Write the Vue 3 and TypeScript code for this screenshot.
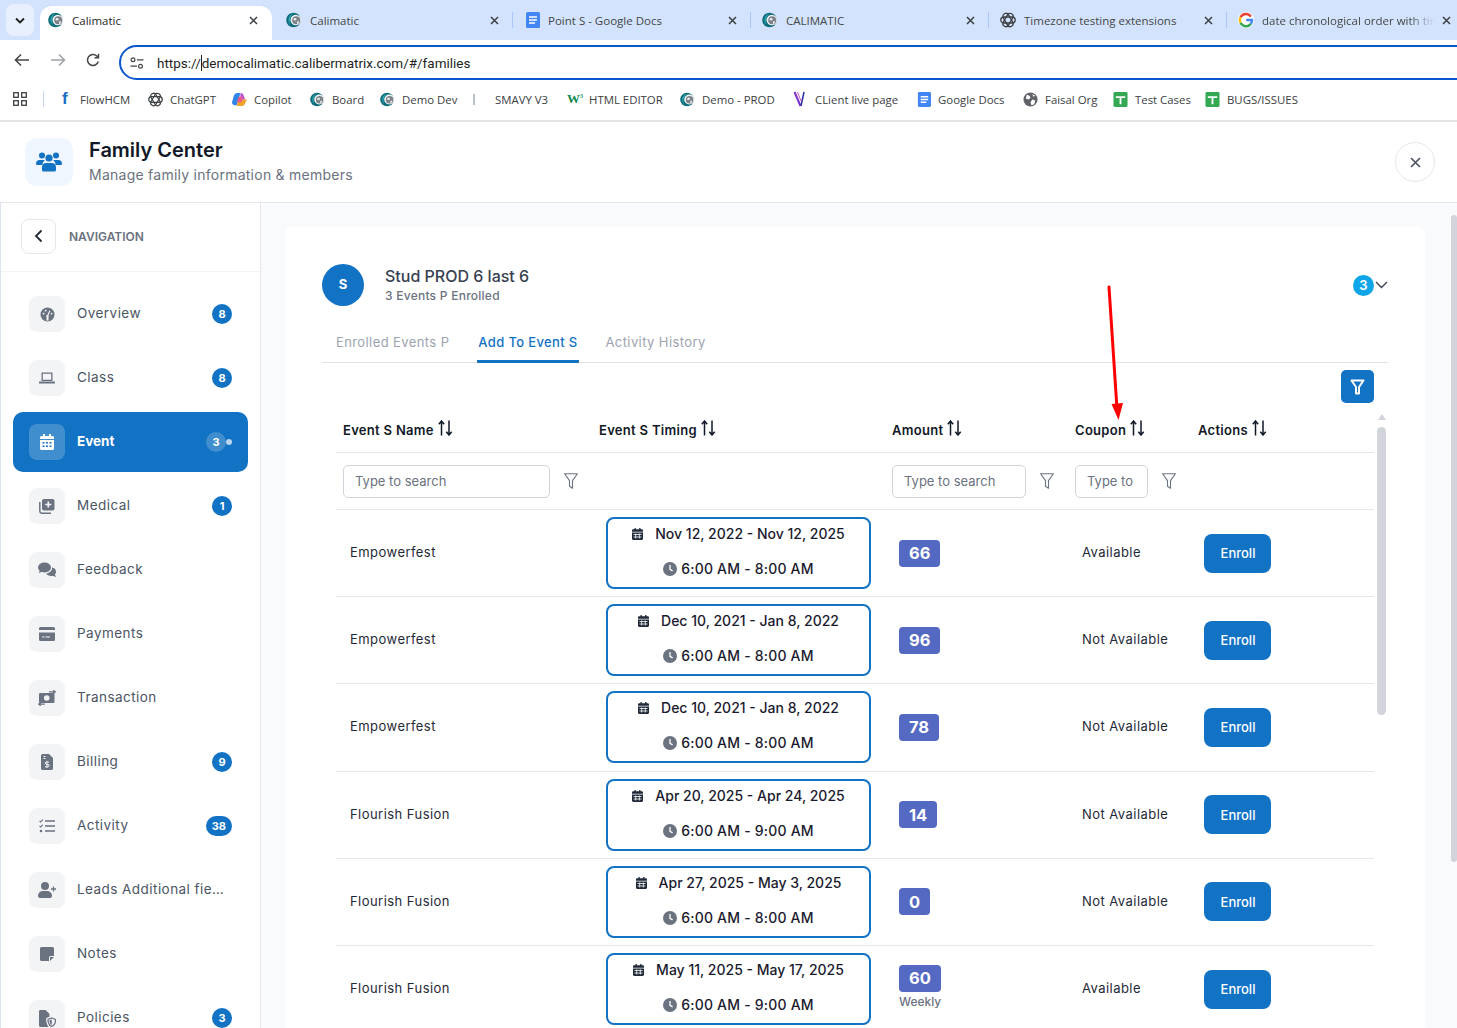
<template>
  <div class="screen">
    <!-- shared favicons and nav glyphs -->
    <svg class="defs" width="0" height="0">
      <symbol id="cal" viewBox="0 0 16 16">
        <circle cx="7.500" cy="8" r="7.300" fill="#0f6c78" />
        <path d="M7 1.500C4.500 2.500 2.500 5 2.500 8s1 4.500 2 5.500C3 11 3 5 7 1.500z" fill="#35b5bd" />
        <circle cx="9.800" cy="8" r="5.300" fill="#f1f3f5" />
        <circle cx="10.200" cy="8.300" r="4" fill="#7d8288" />
        <path d="M8 6.300l2-.4 .7 2-1.500.7L7.300 8zM11 9.500l2-.5-.5 2.300-1.500.8z" fill="#eceef0" />
      </symbol>
      <symbol id="docs" viewBox="0 0 16 16">
        <path d="M2 1.500A1.500 1.500 0 013.500 0H14.500A1.500 1.500 0 0116 1.500V14.500A1.500 1.500 0 0114.500 16H3.500A1.500 1.500 0 012 14.500z" fill="#4285f4" />
        <path d="M5 5h8M5 8h8M5 11h6" stroke="#fff" stroke-width="1.500" />
      </symbol>
      <symbol id="sheet" viewBox="0 0 16 16">
        <rect x="0.500" width="15" height="16" rx="1.500" fill="#34a853" />
        <path d="M3 5.500h10M8 5.500V13" stroke="#fff" stroke-width="2" fill="none" />
      </symbol>
      <symbol id="gpt" viewBox="0 0 16 16">
        <g fill="none" stroke="#3c4043" stroke-width="1.300">
          <rect x="0.800" y="5" width="14.400" height="6" rx="3" />
          <rect x="0.800" y="5" width="14.400" height="6" rx="3" transform="rotate(60 8 8)" />
          <rect x="0.800" y="5" width="14.400" height="6" rx="3" transform="rotate(120 8 8)" />
        </g>
      </symbol>
      <symbol id="globe" viewBox="0 0 16 16">
        <circle cx="8" cy="8" r="7.500" fill="#5f6368" />
        <path d="M4 3l3 1 1 2-2 2-3-1zM10 8l3 1-1 4-3 1-1-3zM10 2l3 2-2 1z" fill="#fff" />
      </symbol>
      <symbol id="copilot" viewBox="0 0 16 16">
        <path d="M5 1h4l-2 7-2 6H3a3 3 0 01-3-3l2-7a4 4 0 013-3z" fill="#2f86e8" />
        <path d="M9 1c2 0 3 1 3.500 3L14 8l-5 .5z" fill="#b44fd6" />
        <path d="M7 8h6l3 0-2 4a4 4 0 01-4 3H5z" fill="#f0a32a" />
        <path d="M7 5h5l-2 6H5z" fill="#e85a8f" />
      </symbol>
      <symbol id="ico-overview" viewBox="0 0 16 16">
        <circle cx="8" cy="8" r="7.500" fill="#6b7280" />
        <path d="M8 8.500V14.500" stroke="#f3f4f6" stroke-width="2.200" />
        <path d="M8 9.500L10.500 4" stroke="#f3f4f6" stroke-width="1.200" />
        <circle cx="3.800" cy="7" r="1" fill="#f3f4f6" />
        <circle cx="6" cy="3.800" r="1" fill="#f3f4f6" />
        <circle cx="12.300" cy="7" r="1" fill="#f3f4f6" />
      </symbol>
      <symbol id="ico-class" viewBox="0 0 16 16">
        <path d="M2.500 2.500h11v8.500h-11zM3.800 3.800v5.900h8.400V3.800z" fill="#6b7280" fill-rule="evenodd" />
        <rect y="11.500" width="16" height="2" rx="0.500" fill="#6b7280" />
      </symbol>
      <symbol id="ico-event" viewBox="0 0 14 16">
        <path d="M3 0h2v2h4V0h2v2h1.500A1.500 1.500 0 0114 3.500V5H0V3.500A1.500 1.500 0 011.500 2H3zM0 6h14v8.500a1.500 1.500 0 01-1.500 1.500h-11A1.500 1.500 0 010 14.500z" fill="#fff" />
        <path d="M2.500 8h2v1.500h-2zM6 8h2v1.500H6zM9.500 8h2v1.500h-2zM2.500 11.500h2V13h-2zM6 11.500h2V13H6zM9.500 11.500h2V13h-2z" fill="#1272c4" />
      </symbol>
      <symbol id="ico-medical" viewBox="0 0 16 16">
        <path d="M5 1h8.500A2 2 0 0115.500 3v7.500a2 2 0 01-2 2H5a2 2 0 01-2-2V3a2 2 0 012-2z" fill="#6b7280" />
        <path d="M9.300 3.500v6M6.300 6.500h6" stroke="#f3f4f6" stroke-width="1.700" />
        <path d="M.8 4v9a2.300 2.300 0 002.300 2.300H12" fill="none" stroke="#6b7280" stroke-width="1.500" />
      </symbol>
      <symbol id="ico-feedback" viewBox="0 0 18 16">
        <ellipse cx="6.500" cy="5.500" rx="6.500" ry="5" fill="#6b7280" />
        <path d="M2 8L.8 11l4-1.500z" fill="#6b7280" />
        <path d="M14.200 5.500A5 4.500 0 0118 9.800c0 1-.4 2-1.100 2.700l1.100 2.500-3.300-1.300a6 6 0 01-1.700.2c-2.200 0-4.100-1-4.900-2.500 3.500-.2 6.100-2.900 6.100-5.900z" fill="#6b7280" />
      </symbol>
      <symbol id="ico-payments" viewBox="0 0 16 14">
        <path d="M1.500 0h13A1.500 1.500 0 0116 1.500V3H0V1.500A1.500 1.500 0 011.500 0zM0 5.500h16v7a1.500 1.500 0 01-1.500 1.500h-13A1.500 1.500 0 010 12.500z" fill="#6b7280" />
        <path d="M3 10h2.500M6.500 10H11" stroke="#f3f4f6" stroke-width="1" />
      </symbol>
      <symbol id="ico-transaction" viewBox="0 0 18 16">
        <rect x="1" y="3" width="15.500" height="10" rx="1" fill="#6b7280" />
        <circle cx="8.700" cy="8" r="2.800" fill="#f3f4f6" />
        <path d="M11 1.800h6M15.200.3L17.500 1.800 15.200 3.300M.8 14.200h6M2.800 12.700L.5 14.200l2.300 1.500" fill="none" stroke="#6b7280" stroke-width="1.200" />
      </symbol>
      <symbol id="ico-billing" viewBox="0 0 12 16">
        <path d="M1.500 0H8l4 4v10.500a1.500 1.500 0 01-1.500 1.500h-9A1.500 1.500 0 010 14.500v-13A1.500 1.500 0 011.500 0z" fill="#6b7280" />
        <path d="M2.500 2.500h2M2.500 4.500h2M8 8H5.500a1.200 1.200 0 000 2.400h1.500a1.200 1.200 0 010 2.400H4M6 7v7" fill="none" stroke="#f3f4f6" stroke-width="1" />
      </symbol>
      <symbol id="ico-activity" viewBox="0 0 16 14">
        <path d="M6 2h10M6 7h10M6 12h10" stroke="#6b7280" stroke-width="1.500" />
        <path d="M.5 1.800l1.200 1.200L3.800.6M.5 6.800L1.700 8l2.100-2.400" fill="none" stroke="#6b7280" stroke-width="1.100" />
        <circle cx="2" cy="12" r="1.300" fill="#6b7280" />
      </symbol>
      <symbol id="ico-leads" viewBox="0 0 18 16">
        <circle cx="7" cy="4" r="4" fill="#6b7280" />
        <path d="M0 14c0-3.300 2.500-5 5-5h4c2.500 0 5 1.700 5 5a2 2 0 01-2 2H2a2 2 0 01-2-2z" fill="#6b7280" />
        <path d="M15.500 4.500v5M13 7h5" stroke="#6b7280" stroke-width="1.300" />
      </symbol>
      <symbol id="ico-notes" viewBox="0 0 14 14">
        <path d="M1.500 0h11A1.500 1.500 0 0114 1.500V9H10.500A1.500 1.500 0 009 10.500V14H1.500A1.500 1.500 0 010 12.500v-11A1.500 1.500 0 011.500 0zM10 14v-3.500a.5.5 0 01.5-.5H14z" fill="#6b7280" />
      </symbol>
      <symbol id="ico-policies" viewBox="0 0 18 18">
        <path d="M1.500 0H7l4 4v3.500c-2 .5-3.300 1-3.500 1.500 0 3 .5 6 2.500 9H1.500A1.500 1.500 0 010 16.500v-15A1.500 1.500 0 011.500 0z" fill="#6b7280" />
        <path d="M13.500 8.500l4 1.500c0 3.500-1 6.300-4 7.500-3-1.200-4-4-4-7.500z" fill="none" stroke="#6b7280" stroke-width="1.300" />
        <path d="M13.500 10v6c-1.500-1-2.300-2.500-2.500-5z" fill="#6b7280" />
      </symbol>
      <symbol id="sort" viewBox="0 0 15 16">
        <path d="M3.500 15.500V1M.8 4.200L3.500 1l2.700 3.200M11 .5V15M8.300 11.800L11 15l2.700-3.200" fill="none" stroke="#111827" stroke-width="1.500" />
      </symbol>
      <symbol id="funnel" viewBox="0 0 14 16">
        <path d="M.6.800h12.800L8.500 7.600v7.600L5.500 13.200V7.600z" fill="none" stroke="#6b7280" stroke-width="1.100" stroke-linejoin="round" />
      </symbol>
      <symbol id="mini-cal" viewBox="0 0 11 12">
        <path d="M2.500 0h1.300v1.300h3.400V0h1.300v1.300h1.200c.6 0 1.300.5 1.300 1.200v1.200H0V2.500c0-.7.600-1.200 1.300-1.200h1.200zM0 4.500h11v6.300c0 .7-.6 1.200-1.300 1.200H1.300C.6 12 0 11.500 0 10.800z" fill="#1f2937" />
        <path d="M1.500 6.500h8M1.500 9h8M3.700 5.500v5M7.300 5.500v5" stroke="#fff" stroke-width="0.800" />
      </symbol>
      <symbol id="mini-clock" viewBox="0 0 14 14">
        <circle cx="7" cy="7" r="7" fill="#6b7280" />
        <path d="M7 3v4.300l2.600 1.600" fill="none" stroke="#fff" stroke-width="1.300" />
      </symbol>
    </svg>

    <!-- browser chrome -->
    <div class="tabstrip">
      <button class="tab-menu">
        <svg width="10" height="7" viewBox="0 0 10 7"><path d="M1 1.500l4 4 4-4" fill="none" stroke="#1f1f1f" stroke-width="1.800" /></svg>
      </button>
      <div v-for="(tab, i) in tabs" :key="i" class="tab" :class="{ 'tab-on': i === 0, 'tab-sep': i > 1 }">
        <svg v-if="tab.icon === 'g'" class="fav" viewBox="0 0 16 16">
          <circle cx="8" cy="8" r="8" fill="#fff" />
          <path d="M12.900 4.600A6 6 0 002.600 5.200" fill="none" stroke="#ea4335" stroke-width="2.400" />
          <path d="M2.600 5.200a6 6 0 000 5.600" fill="none" stroke="#fbbc05" stroke-width="2.400" />
          <path d="M2.600 10.800a6 6 0 0010.300.9" fill="none" stroke="#34a853" stroke-width="2.400" />
          <path d="M12.900 11.700A6 6 0 0014 8H8.200" fill="none" stroke="#4285f4" stroke-width="2.400" />
        </svg>
        <svg v-else class="fav"><use :href="'#' + tab.icon" /></svg>
        <span class="tab-title" :class="{ fade: i === 5 }">{{ tab.title }}</span>
        <svg class="tab-x" width="9" height="9" viewBox="0 0 9 9"><path d="M1 1l7 7M8 1L1 8" stroke="#3c4043" stroke-width="1.500" /></svg>
      </div>
    </div>

    <div class="addr-row">
      <svg width="16" height="14" viewBox="0 0 16 14"><path d="M15 7H2M7 1.500L1.500 7 7 12.500" fill="none" stroke="#444746" stroke-width="1.600" /></svg>
      <svg width="16" height="14" viewBox="0 0 16 14"><path d="M1 7h13M9 1.500L14.500 7 9 12.500" fill="none" stroke="#a0a4a8" stroke-width="1.600" /></svg>
      <svg width="14" height="14" viewBox="0 0 14 14"><path d="M12.300 8.500A5.500 5.500 0 1110.800 3L12.500 4.700M12.500.8v4H8.500" fill="none" stroke="#444746" stroke-width="1.500" /></svg>
      <div class="addr">
        <svg width="14" height="12" viewBox="0 0 14 12"><g fill="none" stroke="#444746" stroke-width="1.200"><circle cx="3" cy="2.800" r="1.900" /><path d="M7 2.800h6.500M.5 9.200H7" /><circle cx="10.500" cy="9.200" r="1.900" /></g></svg>
        <span class="url">https://<i class="caret"></i>democalimatic.calibermatrix.com/#/families</span>
      </div>
    </div>

    <div class="bookmarks">
      <svg class="apps" width="14" height="14" viewBox="0 0 14 14"><g fill="none" stroke="#3c4043" stroke-width="1.300"><rect x="0.700" y="0.700" width="4.600" height="4.600" /><rect x="8.700" y="0.700" width="4.600" height="4.600" /><rect x="0.700" y="8.700" width="4.600" height="4.600" /><rect x="8.700" y="8.700" width="4.600" height="4.600" /></g></svg>
      <i class="bm-sep"></i>
      <div v-for="b in bookmarks" :key="b.label" class="bm" :style="{ width: b.w + 'px' }">
        <span class="bm-icon" :class="{ narrow: b.icon === 'f' }">
          <b v-if="b.icon === 'f'" class="bm-f">f</b>
          <b v-else-if="b.icon === 'w'" class="bm-w">W<sup>3</sup></b>
          <i v-else-if="b.icon === 'sliver'" class="bm-sliver"></i>
          <svg v-else-if="b.icon === 'v'" width="16" height="16" viewBox="0 0 16 16"><path d="M1.500 1l6 14" stroke="#7b2fd1" stroke-width="2" /><path d="M8 15l3-14" stroke="#2a2fa8" stroke-width="1.500" /><path d="M4.500 1l3.500 9" stroke="#d94fb0" stroke-width="1" /></svg>
          <svg v-else width="15" height="15"><use :href="'#' + b.icon" /></svg>
        </span>
        <span>{{ b.label }}</span>
      </div>
    </div>

    <!-- page header -->
    <header class="page-head">
      <div class="head-icon">
        <svg width="26" height="20" viewBox="0 0 26 20" fill="#1272c4">
          <circle cx="6" cy="3.500" r="3" /><circle cx="20" cy="3.500" r="3" /><circle cx="13" cy="6" r="3.600" />
          <path d="M0 12c0-3 1.500-4 3.500-4h4c.6 0 1 .1 1.300.3-1.500 1-2.300 2.700-2.300 4.700H1a1 1 0 01-1-1zM26 12c0-3-1.500-4-3.500-4h-4c-.6 0-1 .1-1.300.3 1.500 1 2.300 2.700 2.300 4.700h5.500a1 1 0 001-1zM10 11h6c2.300 0 4 1.700 4 4.500v2.500a1.500 1.500 0 01-1.500 1.500h-11A1.500 1.500 0 016 18v-2.500C6 12.700 7.700 11 10 11z" />
        </svg>
      </div>
      <div class="head-text">
        <h1>Family Center</h1>
        <p>Manage family information &amp; members</p>
      </div>
      <button class="close">
        <svg width="11" height="11" viewBox="0 0 11 11"><path d="M1 1l9 9M10 1l-9 9" stroke="#4b5563" stroke-width="1.700" /></svg>
      </button>
    </header>

    <div class="body">
      <aside class="side">
        <div class="side-head">
          <button class="back">
            <svg width="9" height="14" viewBox="0 0 9 14"><path d="M7.500 1.500L2 7l5.500 5.500" fill="none" stroke="#1f2937" stroke-width="1.800" /></svg>
          </button>
          <span>NAVIGATION</span>
        </div>
        <nav class="nav">
          <div v-for="item in navItems" :key="item.label" class="nav-item" :class="{ active: item.label === 'Event' }">
            <span class="nav-icon"><svg :width="item.iw" :height="item.ih"><use :href="'#' + item.icon" /></svg></span>
            <span class="nav-label">{{ item.label }}</span>
            <span v-if="item.badge" class="nav-badge">{{ item.badge }}</span>
            <i v-if="item.label === 'Event'" class="nav-dot"></i>
          </div>
        </nav>
      </aside>

      <main class="main">
        <section class="card">
          <div class="student">
            <div class="avatar">S</div>
            <div class="student-info">
              <div class="student-name">Stud PROD 6 last 6</div>
              <div class="student-sub">3 Events P Enrolled</div>
            </div>
            <span class="count">3</span>
            <svg width="13" height="8" viewBox="0 0 13 8"><path d="M1 1l5.500 5.500L12 1" fill="none" stroke="#374151" stroke-width="1.300" /></svg>
          </div>

          <div class="tabs">
            <span>Enrolled Events P</span>
            <span class="tab-active">Add To Event S</span>
            <span>Activity History</span>
          </div>

          <div class="filter-bar">
            <button class="filter-btn">
              <svg width="15" height="16" viewBox="0 0 15 16"><path d="M1.500 1.500h12L9 8v6.500H6V8z" fill="none" stroke="#fff" stroke-width="2" stroke-linejoin="round" /></svg>
            </button>
          </div>

          <div class="table-area">
            <div class="table">
              <div class="row head">
                <div v-for="h in heads" :key="h" class="th">
                  {{ h }}
                  <svg width="15" height="16"><use href="#sort" /></svg>
                </div>
              </div>
              <div class="row search">
                <div class="sf"><input class="in in-name" placeholder="Type to search" /><svg class="fn" width="14" height="16"><use href="#funnel" /></svg></div>
                <div></div>
                <div class="sf"><input class="in in-amt" placeholder="Type to search" /><svg class="fn" width="14" height="16"><use href="#funnel" /></svg></div>
                <div class="sf"><input class="in in-cpn" placeholder="Type to search" /><svg class="fn" width="14" height="16"><use href="#funnel" /></svg></div>
                <div></div>
              </div>
              <div v-for="(r, i) in rows" :key="i" class="row item">
                <div class="cell-name">{{ r.name }}</div>
                <div>
                  <div class="when">
                    <div class="when-line">
                      <svg class="when-cal" width="11" height="12"><use href="#mini-cal" /></svg>
                      {{ r.date }}
                    </div>
                    <div class="when-line when-time">
                      <svg class="when-clock" width="14" height="14"><use href="#mini-clock" /></svg>
                      {{ r.time }}
                    </div>
                  </div>
                </div>
                <div class="cell-amt">
                  <span class="amt">{{ r.amount }}</span>
                  <small v-if="r.note">{{ r.note }}</small>
                </div>
                <div class="cell-cpn">{{ r.coupon }}</div>
                <div class="cell-act"><button class="enroll">Enroll</button></div>
              </div>
            </div>
            <div class="inner-scroll">
              <i class="up"></i>
              <i class="thumb"></i>
            </div>
          </div>
        </section>
      </main>

      <div class="outer-scroll"><i class="thumb2"></i></div>
    </div>

    <!-- annotation drawn over the screenshot -->
    <svg class="arrow" width="30" height="150" viewBox="0 0 30 150">
      <path d="M9 2l8 122" stroke="#f00" stroke-width="3" stroke-linecap="round" />
      <path d="M11.500 119l11.500-1-4.500 17z" fill="#f00" />
    </svg>
  </div>
</template>

<script setup lang="ts">
const tabs = [
  { icon: 'cal', title: 'Calimatic' },
  { icon: 'cal', title: 'Calimatic' },
  { icon: 'docs', title: 'Point S - Google Docs' },
  { icon: 'cal', title: 'CALIMATIC' },
  { icon: 'gpt', title: 'Timezone testing extensions' },
  { icon: 'g', title: 'date chronological order with time' }
]

const bookmarks = [
  { icon: 'f', label: 'FlowHCM', w: 88 },
  { icon: 'gpt', label: 'ChatGPT', w: 84 },
  { icon: 'copilot', label: 'Copilot', w: 78 },
  { icon: 'cal', label: 'Board', w: 70 },
  { icon: 'cal', label: 'Demo Dev', w: 93 },
  { icon: 'sliver', label: 'SMAVY V3', w: 94 },
  { icon: 'w', label: 'HTML EDITOR', w: 113 },
  { icon: 'cal', label: 'Demo - PROD', w: 113 },
  { icon: 'v', label: 'CLient live page', w: 123 },
  { icon: 'docs', label: 'Google Docs', w: 107 },
  { icon: 'globe', label: 'Faisal Org', w: 90 },
  { icon: 'sheet', label: 'Test Cases', w: 92 },
  { icon: 'sheet', label: 'BUGS/ISSUES', w: 110 }
]

const navItems = [
  { label: 'Overview', icon: 'ico-overview', iw: 15, ih: 15, badge: '8' },
  { label: 'Class', icon: 'ico-class', iw: 16, ih: 16, badge: '8' },
  { label: 'Event', icon: 'ico-event', iw: 14, ih: 16, badge: '3' },
  { label: 'Medical', icon: 'ico-medical', iw: 16, ih: 16, badge: '1' },
  { label: 'Feedback', icon: 'ico-feedback', iw: 18, ih: 16, badge: '' },
  { label: 'Payments', icon: 'ico-payments', iw: 16, ih: 14, badge: '' },
  { label: 'Transaction', icon: 'ico-transaction', iw: 18, ih: 16, badge: '' },
  { label: 'Billing', icon: 'ico-billing', iw: 12, ih: 16, badge: '9' },
  { label: 'Activity', icon: 'ico-activity', iw: 16, ih: 14, badge: '38' },
  { label: 'Leads Additional fields', icon: 'ico-leads', iw: 18, ih: 16, badge: '' },
  { label: 'Notes', icon: 'ico-notes', iw: 14, ih: 14, badge: '' },
  { label: 'Policies', icon: 'ico-policies', iw: 17, ih: 17, badge: '3' }
]

const heads = ['Event S Name', 'Event S Timing', 'Amount', 'Coupon', 'Actions']

const rows = [
  { name: 'Empowerfest', date: 'Nov 12, 2022 - Nov 12, 2025', time: '6:00 AM - 8:00 AM', amount: '66', coupon: 'Available', note: '' },
  { name: 'Empowerfest', date: 'Dec 10, 2021 - Jan 8, 2022', time: '6:00 AM - 8:00 AM', amount: '96', coupon: 'Not Available', note: '' },
  { name: 'Empowerfest', date: 'Dec 10, 2021 - Jan 8, 2022', time: '6:00 AM - 8:00 AM', amount: '78', coupon: 'Not Available', note: '' },
  { name: 'Flourish Fusion', date: 'Apr 20, 2025 - Apr 24, 2025', time: '6:00 AM - 9:00 AM', amount: '14', coupon: 'Not Available', note: '' },
  { name: 'Flourish Fusion', date: 'Apr 27, 2025 - May 3, 2025', time: '6:00 AM - 8:00 AM', amount: '0', coupon: 'Not Available', note: '' },
  { name: 'Flourish Fusion', date: 'May 11, 2025 - May 17, 2025', time: '6:00 AM - 9:00 AM', amount: '60', coupon: 'Available', note: 'Weekly' }
]
</script>

<style>
html, body { margin: 0; overflow: hidden; background: #fff; }
</style>

<style scoped>
.screen {
  position: relative;
  height: 1028px;
  display: flex;
  flex-direction: column;
  overflow: hidden;
  font-family: Inter, "Noto Sans", sans-serif;
  color: #111827;
}
.defs { position: absolute; }
button { border: none; padding: 0; font-family: inherit; }

.tabstrip {
  height: 40px;
  flex: none;
  background: #d3e3fd;
  display: flex;
  font-family: "Open Sans", sans-serif;
  font-size: 11.500px;
  color: #444746;
}
.tab-menu {
  width: 28px;
  height: 32px;
  margin: 4px 6px 0 6px;
  flex: none;
  background: #e8f0fe;
  border-radius: 8px;
  display: flex;
  align-items: center;
  justify-content: center;
}
.tab {
  width: 238px;
  flex: none;
  margin-top: 6px;
  height: 34px;
  padding: 0 7px 6px 10px;
  box-sizing: border-box;
  display: flex;
  align-items: center;
  position: relative;
}
.tab-on { background: #fff; border-radius: 12px 12px 0 0; color: #1f1f1f; width: 232px; margin-right: 4px; padding-left: 8px; padding-right: 6px; }
.tab-sep::before {
  content: "";
  position: absolute;
  left: -2px;
  top: 6px;
  height: 16px;
  width: 1px;
  background: #a8c7fa;
}
.fav { width: 16px; height: 16px; flex: none; margin-right: 8px; }
.tab-title { flex: 1; white-space: nowrap; overflow: hidden; }
.fade { -webkit-mask-image: linear-gradient(90deg, #000 85%, transparent); mask-image: linear-gradient(90deg, #000 85%, transparent); }
.tab-x { flex: none; margin: 0 8px 0 7px; }

.addr-row {
  height: 40px;
  flex: none;
  background: #fff;
  padding-left: 14px;
  display: flex;
  align-items: center;
  gap: 20px;
  overflow: hidden;
}
.addr-row > svg { flex: none; }
.addr {
  flex: none;
  width: 1400px;
  height: 35px;
  box-sizing: border-box;
  margin: 5px 0 0 -1px;
  border: 2px solid #0b57d0;
  border-radius: 18px;
  display: flex;
  align-items: center;
  padding-left: 9px;
  gap: 13px;
}
.addr svg { flex: none; }
.url { font-family: Roboto, sans-serif; font-size: 13.500px; color: #1f1f1f; white-space: nowrap; }
.caret { display: inline-block; width: 1px; height: 16px; background: #1f1f1f; vertical-align: -3px; }

.bookmarks {
  height: 42px;
  flex: none;
  box-sizing: border-box;
  background: #fff;
  border-bottom: 2px solid #e3e5e7;
  padding: 0 0 2px 13px;
  display: flex;
  align-items: center;
  font-family: "Open Sans", sans-serif;
  font-size: 11.400px;
  color: #3c4043;
  white-space: nowrap;
}
.apps { flex: none; }
.bm-sep { width: 1px; height: 16px; background: #c7d7ef; margin: 0 16px 0 16px; flex: none; }
.bm { display: flex; align-items: center; flex: none; }
.bm-icon { width: 22px; flex: none; display: flex; align-items: center; }
.bm-icon.narrow { width: 20px; }
.bm-f { color: #1a6fc4; font-size: 17px; font-family: "Liberation Sans", sans-serif; padding-left: 2px; }
.bm-w { color: #0e8a4f; font-size: 13px; font-family: "Liberation Serif", serif; }
.bm-w sup { font-size: 6px; }
.bm-sliver { width: 2px; height: 11px; background: #b8c2cc; margin-left: 0; }

.page-head {
  height: 81px;
  flex: none;
  box-sizing: border-box;
  border-bottom: 1px solid #e5e7eb;
  padding: 0 22px 0 25px;
  display: flex;
  align-items: center;
}
.head-icon {
  width: 48px;
  height: 48px;
  border-radius: 12px;
  background: #eff6ff;
  display: flex;
  align-items: center;
  justify-content: center;
}
.head-text { margin: -2px 0 0 16px; flex: 1; }
.head-text h1 { margin: 0; font-size: 20px; line-height: 28px; font-weight: 600; color: #111827; }
.head-text p { margin: 0; font-size: 14px; line-height: 22px; letter-spacing: 0.25px; color: #6b7280; }
.close {
  width: 40px;
  height: 40px;
  border-radius: 50%;
  background: #fff;
  border: 1px solid #e5e7eb;
  display: flex;
  align-items: center;
  justify-content: center;
}

.body { flex: 1; min-height: 0; display: flex; overflow: hidden; background: #f9fafb; }

.side {
  width: 261px;
  flex: none;
  box-sizing: border-box;
  background: #fff;
  border-right: 1px solid #e5e7eb;
  border-left: 1px solid #dbe3ee;
}
.side-head {
  height: 69px;
  box-sizing: border-box;
  padding: 0 0 2px 20px;
  border-bottom: 1px solid #f3f4f6;
  display: flex;
  align-items: center;
  gap: 13px;
  font-size: 12px;
  font-weight: 600;
  color: #6b7280;
}
.back {
  width: 35px;
  height: 35px;
  background: #fff;
  border: 1px solid #e5e7eb;
  border-radius: 8px;
  display: flex;
  align-items: center;
  justify-content: center;
}
.nav { padding: 12px 12px 0; }
.nav-item {
  height: 60px;
  margin-bottom: 4px;
  border-radius: 10px;
  padding: 0 16px 0 16px;
  display: flex;
  align-items: center;
  font-size: 13.500px;
  color: #4b5563;
  position: relative;
}
.nav-item.active { background: #1272c4; color: #fff; font-weight: 700; }
.nav-icon {
  width: 36px;
  height: 36px;
  flex: none;
  border-radius: 8px;
  background: #f3f4f6;
  display: flex;
  align-items: center;
  justify-content: center;
}
.active .nav-icon { background: rgba(255, 255, 255, 0.2); }
.nav-label {
  flex: 1;
  margin: -2px 0 0 12px;
  letter-spacing: 0.45px;
  line-height: 20px;
  white-space: nowrap;
  overflow: hidden;
  text-overflow: ellipsis;
  max-width: 150px;
}
.active .nav-label { letter-spacing: 0; }
.nav-badge {
  margin-left: auto;
  min-width: 20px;
  height: 20px;
  box-sizing: border-box;
  padding: 0 6px;
  border-radius: 10px;
  background: #1272c4;
  color: #fff;
  font-size: 11px;
  font-weight: 700;
  display: flex;
  align-items: center;
  justify-content: center;
}
.active .nav-badge { background: rgba(255, 255, 255, 0.2); margin-right: 6px; }
.nav-dot {
  position: absolute;
  right: 16px;
  top: 27px;
  width: 6px;
  height: 6px;
  border-radius: 50%;
  background: rgba(255, 255, 255, 0.7);
}

.main { flex: 1; min-width: 0; padding: 24px 0 0 24px; }
.card {
  width: 1140px;
  box-sizing: border-box;
  background: #fff;
  padding: 37px 37px 0;
  border-radius: 8px;
}
.student { display: flex; align-items: center; height: 42px; }
.avatar {
  width: 42px;
  height: 42px;
  padding-bottom: 2px;
  box-sizing: border-box;
  border-radius: 50%;
  background: #1272c4;
  color: #fff;
  font-size: 13px;
  font-weight: 700;
  display: flex;
  align-items: center;
  justify-content: center;
}
.student-info { margin-left: 21px; flex: 1; }
.student-name { font-size: 16px; line-height: 22px; font-weight: 500; color: #374151; }
.student-sub { font-size: 12px; line-height: 18px; font-weight: 500; letter-spacing: 0.25px; color: #6b7280; }
.count {
  width: 21px;
  height: 21px;
  border-radius: 50%;
  background: #0ea5e9;
  color: #fff;
  font-size: 13px;
  font-weight: 600;
  display: flex;
  align-items: center;
  justify-content: center;
  margin-right: 1px;
}
.tabs {
  margin-top: 20px;
  height: 36px;
  padding-left: 14px;
  border-bottom: 1px solid #e0e2e6;
  display: flex;
  gap: 27px;
  font-size: 13px;
  letter-spacing: 0.4px;
  line-height: 32px;
  color: #9ca3af;
}
.tab-active {
  color: #1272c4;
  font-weight: 500;
  border-bottom: 3px solid #1272c4;
  height: 34px;
  margin: 0 0 -1px 1px;
  padding: 0 1px;
  letter-spacing: 0.35px;
  border-radius: 1px;
}
.filter-bar { padding: 7px 14px 0 0; display: flex; justify-content: flex-end; }
.filter-btn {
  width: 33px;
  height: 33px;
  background: #1272c4;
  border-radius: 5px;
  display: flex;
  align-items: center;
  justify-content: center;
}

.table-area { margin-left: 14px; display: flex; align-items: flex-start; }
.table { width: 1038px; flex: none; }
.row {
  display: grid;
  grid-template-columns: 256px 293px 183px 123px 1fr;
  border-bottom: 1px solid #e5e7eb;
  box-sizing: border-box;
}
.head { height: 50px; align-items: center; padding-top: 4px; }
.th {
  padding-left: 7px;
  font-size: 13px;
  font-weight: 600;
  letter-spacing: 0.3px;
  color: #111827;
  display: flex;
  align-items: center;
  gap: 4px;
  white-space: nowrap;
}
.th svg { margin-top: -3px; }
.search { height: 57px; align-items: center; }
.sf { padding-left: 7px; display: flex; align-items: center; }
.in {
  box-sizing: border-box;
  height: 33px;
  padding: 0 11px;
  border: 1px solid #d1d5db;
  border-radius: 5px;
  background: #fff;
  font-family: inherit;
  font-size: 13px;
  outline: none;
}
.in::placeholder { color: #6b7280; }
.in-name { width: 207px; }
.in-amt { width: 134px; }
.in-cpn { width: 73px; }
.fn { flex: none; margin-left: 14px; }
.item { height: 87.200px; align-items: center; font-size: 13px; letter-spacing: 0.45px; color: #1f2937; }
.cell-name { padding: 0 0 2px 14px; }
.when {
  box-sizing: border-box;
  width: 265px;
  height: 72px;
  margin-left: 14px;
  border: 2px solid #1272c4;
  border-radius: 8px;
  display: flex;
  flex-direction: column;
  justify-content: space-between;
  padding: 5px 0 8px;
  font-size: 14px;
  letter-spacing: 0;
  font-weight: 500;
  color: #1a1a2e;
}
.when-line { display: flex; align-items: center; justify-content: center; line-height: 20px; white-space: nowrap; }
.when-time { letter-spacing: 0.2px; }
.when-cal { margin-right: 12px; }
.when-clock { margin-right: 4px; }
.cell-amt { padding-left: 14px; display: flex; flex-direction: column; align-items: flex-start; letter-spacing: 0; }
.amt {
  height: 27px;
  min-width: 28px;
  padding: 0 10px;
  box-sizing: border-box;
  border-radius: 4px;
  background: #5469c1;
  color: #fff;
  font-size: 16.500px;
  font-weight: 700;
  display: flex;
  align-items: center;
  justify-content: center;
}
.cell-amt small { font-size: 12px; line-height: 14px; font-weight: 500; color: #6b7280; margin: 3px 0 5px; }
.cell-cpn { padding: 0 0 2px 14px; }
.cell-act { padding-left: 13px; }
.enroll {
  width: 67px;
  height: 39px;
  border-radius: 8px;
  background: #1272c4;
  color: #fff;
  font-size: 13px;
  font-weight: 500;
  padding-left: 1px;
}

.inner-scroll { margin-left: 3px; width: 9px; padding-top: 11px; flex: none; display: flex; flex-direction: column; align-items: center; }
.up { width: 0; height: 0; border: 4px solid transparent; border-top: 0; border-bottom: 6px solid #d1d5db; margin-bottom: 7px; }
.thumb { width: 9px; height: 288px; border-radius: 5px; background: #d1d5db; }

.outer-scroll { width: 6px; flex: none; background: #f9fafb; padding-top: 12px; }
.thumb2 { display: block; width: 6px; height: 647px; background: #d1d5db; border-radius: 3px; }

.arrow { position: absolute; left: 1100px; top: 285px; pointer-events: none; }
</style>
